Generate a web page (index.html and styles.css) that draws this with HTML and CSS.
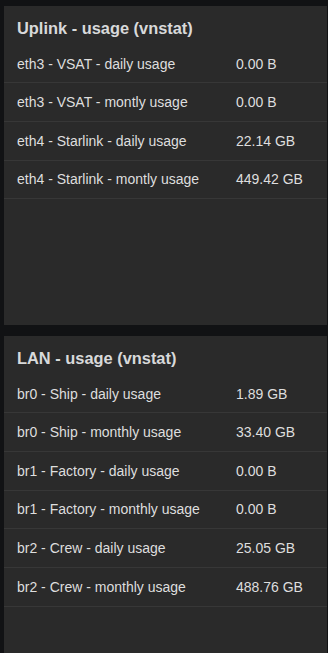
FILE: index.html
```html
<!DOCTYPE html>
<html lang="en">
<head>
    <meta charset="UTF-8">
    <meta name="viewport" content="width=device-width, initial-scale=1.0">
    <title>vnstat usage</title>
    <link rel="stylesheet" href="styles.css">
</head>
<body>
    <div class="dashboard">
        <div class="panel">
            <div class="panel-title">Uplink - usage (vnstat)</div>
            <div class="table">
                <div class="row"><span class="cell">eth3 - VSAT - daily usage</span><span class="cell">0.00 B</span></div>
                <div class="row"><span class="cell">eth3 - VSAT - montly usage</span><span class="cell">0.00 B</span></div>
                <div class="row"><span class="cell">eth4 - Starlink - daily usage</span><span class="cell">22.14 GB</span></div>
                <div class="row"><span class="cell">eth4 - Starlink - montly usage</span><span class="cell">449.42 GB</span></div>
            </div>
        </div>

        <div class="panel">
            <div class="panel-title">LAN - usage (vnstat)</div>
            <div class="table">
                <div class="row"><span class="cell">br0 - Ship - daily usage</span><span class="cell">1.89 GB</span></div>
                <div class="row"><span class="cell">br0 - Ship - monthly usage</span><span class="cell">33.40 GB</span></div>
                <div class="row"><span class="cell">br1 - Factory - daily usage</span><span class="cell">0.00 B</span></div>
                <div class="row"><span class="cell">br1 - Factory - monthly usage</span><span class="cell">0.00 B</span></div>
                <div class="row"><span class="cell">br2 - Crew - daily usage</span><span class="cell">25.05 GB</span></div>
                <div class="row"><span class="cell">br2 - Crew - monthly usage</span><span class="cell">488.76 GB</span></div>
            </div>
        </div>
    </div>
</body>
</html>
```

FILE: styles.css
```css
body {
    margin: 0;
    background: #111214;
    font-family: 'Liberation Sans', Arial, sans-serif;
    color: #dedede;
}

.dashboard {
    display: flex;
    flex-direction: column;
    gap: 11px;
    padding: 6px 1px 0 4px;
}

.panel {
    height: 319px;
    flex-shrink: 0;
    background: #2a2a2a;
}

.panel-title {
    height: 38.7px;
    box-sizing: border-box;
    padding: 10px 13px 0;
    font-size: 16.4px;
    line-height: 24px;
    font-weight: bold;
    color: #d8d9da;
}

/* table rows */
.row {
    display: grid;
    grid-template-columns: 219px 1fr;
    height: 38.67px;
    box-sizing: border-box;
    border-bottom: 1px solid #373737;
    align-items: center;
    font-size: 14px;
    line-height: 16px;
}

.cell {
    padding: 0 13px;
    white-space: nowrap;
}
```
